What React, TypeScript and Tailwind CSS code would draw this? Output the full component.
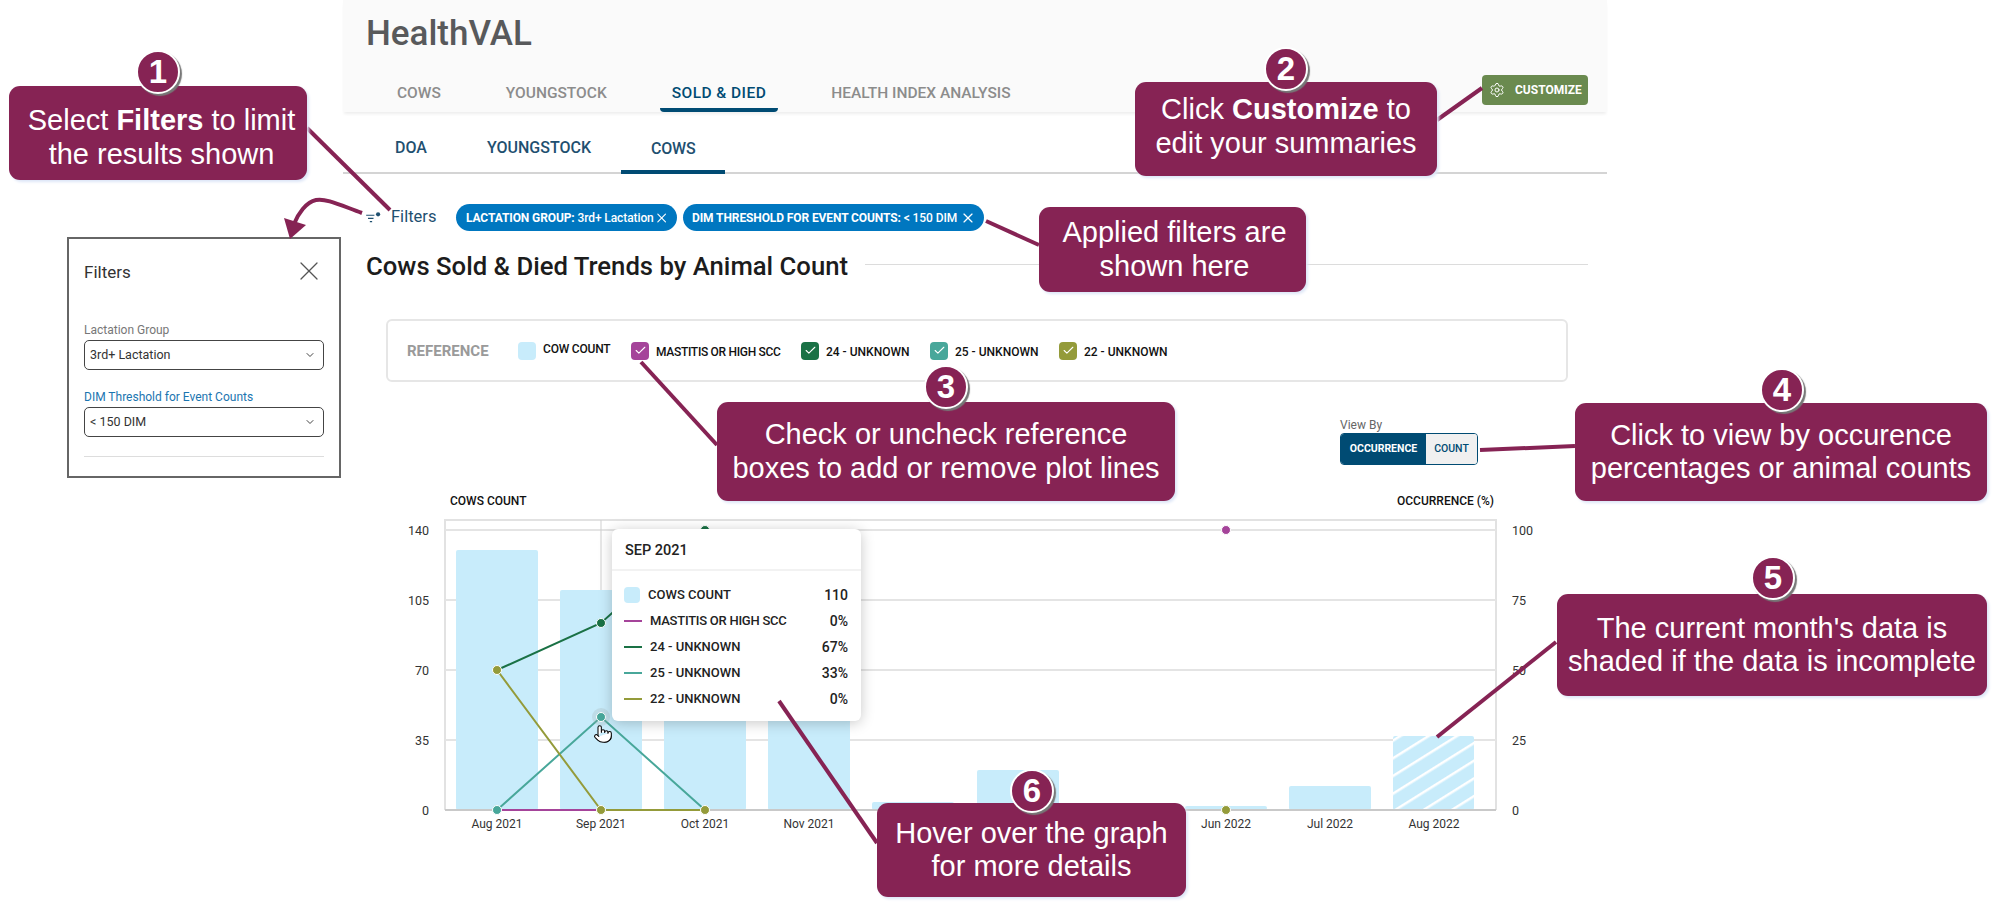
import React from 'react';
import { Check, ChevronDown, Pointer, Settings, X } from 'lucide-react';

const BAR = '#c8ecfb';
const MASTITIS = '#a5449a';
const DARK_GREEN = '#1a7145';
const TEAL = '#48a79a';
const OLIVE = '#949b3a';

// page coordinates, the chart svg uses a matching viewBox
const bars = [
  { x: 456, top: 550 },
  { x: 560, top: 590 },
  { x: 664, top: 610 },
  { x: 768, top: 640 },
  { x: 872, top: 802 },
  { x: 977, top: 770 },
  { x: 1081, top: 806 },
  { x: 1185, top: 806 },
  { x: 1289, top: 786 },
];

const xLabels = [
  { x: 497, label: 'Aug 2021' },
  { x: 601, label: 'Sep 2021' },
  { x: 705, label: 'Oct 2021' },
  { x: 809, label: 'Nov 2021' },
  { x: 1226, label: 'Jun 2022' },
  { x: 1330, label: 'Jul 2022' },
  { x: 1434, label: 'Aug 2022' },
];

const yTicks = [
  { y: 530, left: '140', right: '100' },
  { y: 600, left: '105', right: '75' },
  { y: 670, left: '70', right: '50' },
  { y: 740, left: '35', right: '25' },
  { y: 810, left: '0', right: '0' },
];

const legend = [
  { label: 'MASTITIS OR HIGH SCC', color: 'bg-[#a5449a]', text: 'w-[125px] mr-[20px] tracking-[-0.3px]' },
  { label: '24 - UNKNOWN', color: 'bg-[#1a7145]', text: 'w-[84px] mr-[20px]' },
  { label: '25 - UNKNOWN', color: 'bg-[#48a79a]', text: 'w-[84px] mr-[20px]' },
  { label: '22 - UNKNOWN', color: 'bg-[#949b3a]', text: 'w-[84px]' },
];

const tooltipRows = [
  { label: 'MASTITIS OR HIGH SCC', value: '0%', color: 'bg-[#a5449a]', text: 'tracking-[-0.25px]' },
  { label: '24 - UNKNOWN', value: '67%', color: 'bg-[#1a7145]', text: '' },
  { label: '25 - UNKNOWN', value: '33%', color: 'bg-[#48a79a]', text: '' },
  { label: '22 - UNKNOWN', value: '0%', color: 'bg-[#949b3a]', text: '' },
];

function Dot({ x, y, color, r = 4.5 }: { x: number; y: number; color: string; r?: number }) {
  return <circle cx={x} cy={y} r={r} fill={color} stroke="#fff" strokeWidth={1} />;
}

function Chart() {
  return (
    <svg viewBox="343 490 1264 350" className="block w-[1264px] h-[350px]">
      <defs>
        <pattern id="hatch" width="15" height="15" patternUnits="userSpaceOnUse" patternTransform="rotate(58)">
          <rect width="15" height="15" fill={BAR} />
          <rect width="2.5" height="15" fill="#fff" />
        </pattern>
      </defs>
      <text x={450} y={505} fontSize={12} fontWeight={500} fill="#111">COWS COUNT</text>
      <text x={1397} y={505} fontSize={12} fontWeight={500} fill="#111">OCCURRENCE (%)</text>

      <path d="M445 810V520H1496V810" fill="none" stroke="#e2e2e2" strokeWidth={2} />
      {yTicks.map(t => (
        <g key={t.y}>
          <line x1={445} x2={1496} y1={t.y} y2={t.y} stroke="#e4e4e4" strokeWidth={2} />
          <text x={429} y={t.y + 4.5} textAnchor="end" fontSize={12.5} fill="#333">{t.left}</text>
          <text x={1512} y={t.y + 4.5} fontSize={12.5} fill="#333">{t.right}</text>
        </g>
      ))}
      <line x1={601} x2={601} y1={520} y2={810} stroke="#cfcfcf" strokeWidth={1} />

      {bars.map(b => (
        <rect key={b.x} x={b.x} y={b.top} width={82} height={810 - b.top} rx={2} fill={BAR} />
      ))}
      <rect x={1393} y={736} width={81} height={74} rx={2} fill="url(#hatch)" />
      <line x1={445} x2={1496} y1={810} y2={810} stroke="#c9c9c9" strokeWidth={2} />

      <polyline points="497,810 601,810" fill="none" stroke={MASTITIS} strokeWidth={2} />
      <polyline points="497,670 601,623 705,530" fill="none" stroke={DARK_GREEN} strokeWidth={2} />
      <polyline points="497,810 601,717 705,810" fill="none" stroke={TEAL} strokeWidth={2} />
      <polyline points="497,670 601,810 705,810" fill="none" stroke={OLIVE} strokeWidth={2} />

      <circle cx={601} cy={717} r={9} fill="#9aa5a0" fillOpacity={0.22} />
      <Dot x={705} y={530} color={DARK_GREEN} />
      <Dot x={601} y={623} color={DARK_GREEN} />
      <Dot x={601} y={717} color={TEAL} />
      <Dot x={497} y={810} color={TEAL} />
      <Dot x={497} y={670} color={OLIVE} />
      <Dot x={601} y={810} color={OLIVE} />
      <Dot x={705} y={810} color={OLIVE} />
      <Dot x={1226} y={810} color={OLIVE} />
      <Dot x={1226} y={530} color={MASTITIS} />

      {xLabels.map(l => (
        <text key={l.label} x={l.x} y={828} textAnchor="middle" fontSize={12} fill="#333">{l.label}</text>
      ))}
    </svg>
  );
}

function ChartTooltip() {
  return (
    <div className="absolute left-[269px] top-[39px] w-[249px] h-[192px] bg-white rounded-md shadow-[0_2px_14px_rgba(0,0,0,0.22)]">
      <div className="h-[42px] border-b-2 border-[#f2f2f2] pl-[13px] pt-[3px] flex items-center text-[14.5px] font-medium text-[#222]">
        SEP 2021
      </div>
      <div className="pl-[12px] pr-[13px] pt-[11px] text-[13px] font-medium text-[#222]">
        <div className="h-[26px] flex items-center">
          <span className="w-4 h-4 rounded-sm bg-[#c8ecfb] mr-2" />
          <span className="flex-1">COWS COUNT</span>
          <span className="text-[14px]">110</span>
        </div>
        {tooltipRows.map(r => (
          <div key={r.label} className="h-[26px] flex items-center">
            <span className={`w-[18px] h-[2px] mr-2 ${r.color}`} />
            <span className={`flex-1 ${r.text}`}>{r.label}</span>
            <span className="text-[14px]">{r.value}</span>
          </div>
        ))}
      </div>
    </div>
  );
}

function Callout({ className, badge, badgeClass, lines }: {
  className: string;
  badge?: string;
  badgeClass?: string;
  lines: React.ReactNode[];
}) {
  return (
    <div className={`absolute rounded-[11px] bg-[#862354] text-white text-center flex flex-col justify-center items-center text-[29px] leading-[33.5px] whitespace-nowrap shadow-[2px_2px_3px_#dde6f7] font-['Liberation_Sans',Arial,sans-serif] ${className}`}>
      {lines.map((l, i) => <div key={i}>{l}</div>)}
      {badge && (
        <div className={`absolute w-[44px] h-[44px] rounded-full bg-[#862354] border-2 border-white flex items-center justify-center text-[33px] font-bold shadow-[2px_2px_1px_#777] ${badgeClass}`}>
          {badge}
        </div>
      )}
    </div>
  );
}

function FilterSelect({ value }: { value: string }) {
  return (
    <div className="h-[30px] border border-[#444] rounded-[5px] px-[5px] flex items-center justify-between text-[12.5px] text-[#333]">
      <span>{value}</span>
      <ChevronDown className="w-3 h-3 mr-[2px] text-[#444]" />
    </div>
  );
}

function FilterPanel() {
  return (
    <div className="w-[274px] h-[241px] border-2 border-[#666] bg-white pl-[15px] pr-[15px]">
      <div className="h-[66px] flex items-center justify-between pt-[2px]">
        <span className="text-[17px] text-[#333]">Filters</span>
        <X className="w-[32px] h-[32px] -mr-[1px] -mt-[4px] text-[#555]" strokeWidth={0.95} />
      </div>
      <div className="text-[12px] leading-[18px] text-[#777] mt-[16px] mb-[1px]">Lactation Group</div>
      <FilterSelect value="3rd+ Lactation" />
      <div className="text-[12px] leading-[18px] text-[#1b75b0] mt-[18px] mb-[1px]">DIM Threshold for Event Counts</div>
      <FilterSelect value="< 150 DIM" />
      <div className="mt-[19px] border-t border-[#ddd]" />
    </div>
  );
}

// leader lines between the callouts and what they point at
function Leaders() {
  const lines = [
    [307, 128, 390, 210],
    [1437, 120, 1482, 88],
    [986, 221, 1039, 245],
    [641, 362, 717, 445],
    [1480, 450, 1575, 446],
    [1556, 642, 1437, 737],
    [779, 701, 877, 843],
  ];
  return (
    <svg viewBox="0 0 2001 911" className="absolute inset-0 w-[2001px] h-[911px] pointer-events-none">
      {lines.map(([x1, y1, x2, y2]) => (
        <line key={x1} x1={x1} y1={y1} x2={x2} y2={y2} stroke="#862354" strokeWidth={4} />
      ))}
      <path d="M362 213C340 205 326 198 316 200C306 202 298 214 294 224" fill="none" stroke="#862354" strokeWidth={4} />
      <path d="M290 239L284 218L306 225Z" fill="#862354" />
    </svg>
  );
}

export default function App() {
  return (
    <div className="relative w-[2001px] h-[911px] bg-white overflow-hidden flex font-['Roboto',sans-serif]">
      <aside className="w-[343px] pt-[237px] pl-[67px]">
        <FilterPanel />
      </aside>

      <main className="w-[1264px]">
        <header className="h-[112px] bg-[#fafafa] shadow-[0_3px_3px_-1px_rgba(0,0,0,0.07)]">
          <div className="h-[75px] pl-[23px] pt-[13px] text-[35px] leading-[42px] font-medium text-[#58595b]">HealthVAL</div>
          <div className="flex items-start justify-between pr-[19px]">
            <nav className="flex gap-[41px] ml-[42px] text-[15.5px] font-medium h-[37px]">
              <span className="px-3 pt-[7px] text-[#8c8c8c]">COWS</span>
              <span className="px-3 pt-[7px] text-[#8c8c8c]">YOUNGSTOCK</span>
              <span className="px-3 pt-[7px] text-[#004b73] tracking-[0.45px] border-b-4 border-[#004b73] rounded-b-sm">SOLD &amp; DIED</span>
              <span className="px-3 pt-[7px] text-[#8c8c8c]">HEALTH INDEX ANALYSIS</span>
            </nav>
            <button className="w-[106px] h-[30px] bg-[#6a8a4f] rounded-[4px] flex items-center pl-[7px] text-white text-[12px] font-bold">
              <Settings className="w-[16px] h-[16px] mr-[10px]" strokeWidth={1.5} />
              CUSTOMIZE
            </button>
          </div>
        </header>

        <nav className="h-[62px] border-b-2 border-[#d4d4d4] flex items-end pl-[22px] text-[16px] font-medium text-[#1f5070]">
          <span className="px-[30px] h-[42px] pt-[6px]">DOA</span>
          <span className="px-[30px] h-[42px] pt-[6px]">YOUNGSTOCK</span>
          <span className="px-[30px] h-[44px] pt-[7px] -mb-[2px] border-b-4 border-[#004b73] tracking-[-0.2px]">COWS</span>
        </nav>

        <div className="h-[27px] mt-[30px] flex items-center pl-[23px]">
          <svg viewBox="0 0 16 12" className="w-[15px] h-[11px] mr-[10px]">
            <path d="M0 3.5H9M2 7H8M4 10.5H6.5" stroke="#1f5070" strokeWidth={1.2} fill="none" />
            <circle cx={13} cy={2.5} r={2.3} fill="#1f5070" />
          </svg>
          <span className="w-[65px] text-[16.5px] text-[#1f5070]">Filters</span>
          <span className="h-[27px] w-[221px] rounded-full bg-[#0077c0] text-white text-[12px] tracking-[-0.1px] font-bold flex items-center pl-[10px] mr-[6px] whitespace-nowrap">
            LACTATION GROUP:&nbsp;<span className="font-medium">3rd+ Lactation</span>
            <X className="w-4 h-4 ml-auto mr-[8px]" strokeWidth={1.75} />
          </span>
          <span className="h-[27px] w-[301px] rounded-full bg-[#0077c0] text-white text-[12px] tracking-[-0.1px] font-bold flex items-center pl-[9px] whitespace-nowrap">
            DIM THRESHOLD FOR EVENT COUNTS:&nbsp;<span className="font-medium">&lt; 150 DIM</span>
            <X className="w-4 h-4 ml-auto mr-[8px]" strokeWidth={1.75} />
          </span>
        </div>

        <div className="h-[30px] mt-[20px] flex items-center pl-[23px] pr-[19px]">
          <h2 className="text-[25.7px] font-medium text-[#1c1c1c] whitespace-nowrap">Cows Sold &amp; Died Trends by Animal Count</h2>
          <div className="flex-1 ml-[17px] border-t border-[#dcdcdc] -mt-[3px]" />
        </div>

        <div className="h-[63px] mt-[38px] ml-[43px] w-[1182px] border-2 border-[#e6e6e6] rounded-md flex items-center pl-[19px] text-[12px] font-medium text-[#111]">
          <span className="w-[111px] text-[15px] font-bold text-[#9a9a9a] pt-[1px]">REFERENCE</span>
          <span className="w-[18px] h-[18px] rounded-sm bg-[#c8ecfb] mr-[7px]" />
          <span className="w-[68px] mr-[20px] -mt-[3px] tracking-[-0.2px] whitespace-nowrap">COW COUNT</span>
          {legend.map(l => (
            <React.Fragment key={l.label}>
              <span className={`w-[18px] h-[18px] rounded-sm flex items-center justify-center mr-[7px] ${l.color}`}>
                <Check className="w-[13px] h-[13px] text-white" strokeWidth={2} />
              </span>
              <span className={`pt-[2px] whitespace-nowrap ${l.text}`}>{l.label}</span>
            </React.Fragment>
          ))}
        </div>

        <div className="h-[47px] mt-[36px] ml-[997px]">
          <div className="text-[12px] leading-[14px] text-[#666]">View By</div>
          <div className="w-[138px] h-[32px] mt-[1px] flex rounded-[4px] border border-[#004b73] overflow-hidden text-[10.5px] font-bold">
            <span className="w-[85px] bg-[#004b73] text-white flex items-center justify-center">OCCURRENCE</span>
            <span className="flex-1 bg-[#f0f0f0] text-[#004b73] font-medium flex items-center justify-center">COUNT</span>
          </div>
        </div>

        <div className="relative mt-[25px]">
          <Chart />
          <ChartTooltip />
          <Pointer className="absolute left-[250px] top-[232px] w-[20px] h-[24px] text-black fill-white" strokeWidth={1.25} />
        </div>
      </main>

      <Leaders />

      <Callout className="left-[9px] top-[86px] w-[298px] h-[94px] pt-[9px] pl-[7px]" badge="1" badgeClass="left-[127px] -top-[36px]"
        lines={[<>Select <b>Filters</b> to limit</>, 'the results shown']} />
      <Callout className="left-[1135px] top-[82px] w-[302px] h-[94px] pb-[5px]" badge="2" badgeClass="left-[129px] -top-[35px]"
        lines={[<>Click <b>Customize</b> to</>, 'edit your summaries']} />
      <Callout className="left-[1039px] top-[207px] w-[267px] h-[85px] pl-[4px]"
        lines={['Applied filters are', 'shown here']} />
      <Callout className="left-[717px] top-[402px] w-[458px] h-[99px]" badge="3" badgeClass="left-[207px] -top-[37px]"
        lines={['Check or uncheck reference', 'boxes to add or remove plot lines']} />
      <Callout className="left-[1575px] top-[403px] w-[412px] h-[98px]" badge="4" badgeClass="left-[185px] -top-[35px]"
        lines={['Click to view by occurence', 'percentages or animal counts']} />
      <Callout className="left-[1557px] top-[594px] w-[430px] h-[102px]" badge="5" badgeClass="left-[194px] -top-[38px]"
        lines={["The current month's data is", 'shaded if the data is incomplete']} />
      <Callout className="left-[877px] top-[803px] w-[309px] h-[94px]" badge="6" badgeClass="left-[133px] -top-[34px]"
        lines={['Hover over the graph', 'for more details']} />
    </div>
  );
}
